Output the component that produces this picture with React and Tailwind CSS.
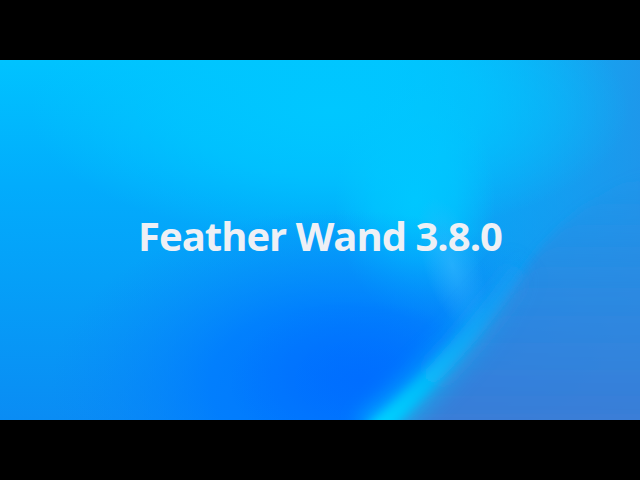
import React from 'react';

// Abstract wallpaper behind the title, drawn in panel coords (640x360)
function Wallpaper() {
  return (
    <svg
      className="absolute inset-0 h-full w-full"
      viewBox="0 0 640 360"
      preserveAspectRatio="none"
    >
      <defs>
        <linearGradient id="base" x1="0" y1="0" x2="0" y2="1">
          <stop offset="0" stopColor="#00c3ff" />
          <stop offset="0.35" stopColor="#02acfc" />
          <stop offset="0.6" stopColor="#05a0f8" />
          <stop offset="1" stopColor="#0a8cf4" />
        </linearGradient>
        <linearGradient id="right" x1="0" y1="0" x2="1" y2="0">
          <stop offset="0.6" stopColor="#1a9aec" stopOpacity="0" />
          <stop offset="1" stopColor="#2292e8" stopOpacity="0.85" />
        </linearGradient>
        <radialGradient id="glow" cx="0.5" cy="0.5" r="0.5">
          <stop offset="0" stopColor="#00c7ff" stopOpacity="1" />
          <stop offset="0.5" stopColor="#00c7ff" stopOpacity="0.7" />
          <stop offset="1" stopColor="#00c7ff" stopOpacity="0" />
        </radialGradient>
        <radialGradient id="blob" cx="0.5" cy="0.5" r="0.5">
          <stop offset="0" stopColor="#0074ff" stopOpacity="1" />
          <stop offset="0.45" stopColor="#007aff" stopOpacity="0.8" />
          <stop offset="1" stopColor="#0a88f8" stopOpacity="0" />
        </radialGradient>
        <radialGradient id="core" cx="0.5" cy="0.5" r="0.5">
          <stop offset="0" stopColor="#006eff" stopOpacity="1" />
          <stop offset="1" stopColor="#006eff" stopOpacity="0" />
        </radialGradient>
        <radialGradient id="ridge" cx="0.5" cy="0.5" r="0.5">
          <stop offset="0" stopColor="#3ab8ff" stopOpacity="0.55" />
          <stop offset="1" stopColor="#3ab8ff" stopOpacity="0" />
        </radialGradient>
        <linearGradient id="purple" gradientUnits="userSpaceOnUse" x1="0" y1="110" x2="0" y2="370">
          <stop offset="0" stopColor="#2a8ae2" stopOpacity="0" />
          <stop offset="0.45" stopColor="#2c88e0" stopOpacity="0.85" />
          <stop offset="1" stopColor="#3b7cd6" />
        </linearGradient>
        <linearGradient id="arc" gradientUnits="userSpaceOnUse" x1="380" y1="370" x2="530" y2="200">
          <stop offset="0" stopColor="#00d4ff" stopOpacity="1" />
          <stop offset="0.45" stopColor="#0cb8f6" stopOpacity="0.7" />
          <stop offset="1" stopColor="#30a8f0" stopOpacity="0" />
        </linearGradient>
        <filter id="b10" x="-30%" y="-30%" width="160%" height="160%">
          <feGaussianBlur stdDeviation="10" />
        </filter>
        <filter id="b5" x="-30%" y="-30%" width="160%" height="160%">
          <feGaussianBlur stdDeviation="5" />
        </filter>
      </defs>

      <rect x="0" y="0" width="640" height="360" fill="url(#base)" />
      <rect x="0" y="0" width="640" height="360" fill="url(#right)" />

      {/* bright cyan top and ridge */}
      <ellipse cx="330" cy="50" rx="300" ry="130" fill="url(#glow)" />
      <ellipse cx="415" cy="140" rx="80" ry="120" fill="url(#glow)" />

      {/* deep blue blob */}
      <ellipse cx="340" cy="325" rx="290" ry="175" fill="url(#blob)" />
      <ellipse cx="360" cy="320" rx="130" ry="80" fill="url(#core)" />

      {/* light ridge next to the title */}
      <ellipse cx="452" cy="205" rx="28" ry="70" fill="url(#ridge)" transform="rotate(-18 452 205)" />

      {/* region beyond the arc */}
      <path
        d="M380 372 Q472 290 532 200 Q575 140 650 110 L660 372 Z"
        fill="url(#purple)"
        filter="url(#b5)"
      />

      {/* cyan arc */}
      <path
        d="M370 376 Q466 292 528 198"
        stroke="url(#arc)"
        strokeWidth="40"
        fill="none"
        opacity="0.55"
        filter="url(#b10)"
      />
      <path
        d="M372 374 Q466 290 528 196"
        stroke="url(#arc)"
        strokeWidth="18"
        fill="none"
        filter="url(#b5)"
      />
    </svg>
  );
}

export default function App() {
  return (
    <div className="flex h-[480px] w-[640px] flex-col bg-black">
      <div className="h-[60px]" />
      <div className="relative flex h-[360px] items-center justify-center overflow-hidden">
        <Wallpaper />
        <h1 className="relative mb-[8px] font-['Open_Sans',sans-serif] text-[40px] font-bold leading-none tracking-[-1px] text-[#eef0f5]">
          Feather Wand 3.8.0
        </h1>
      </div>
      <div className="h-[60px]" />
    </div>
  );
}
